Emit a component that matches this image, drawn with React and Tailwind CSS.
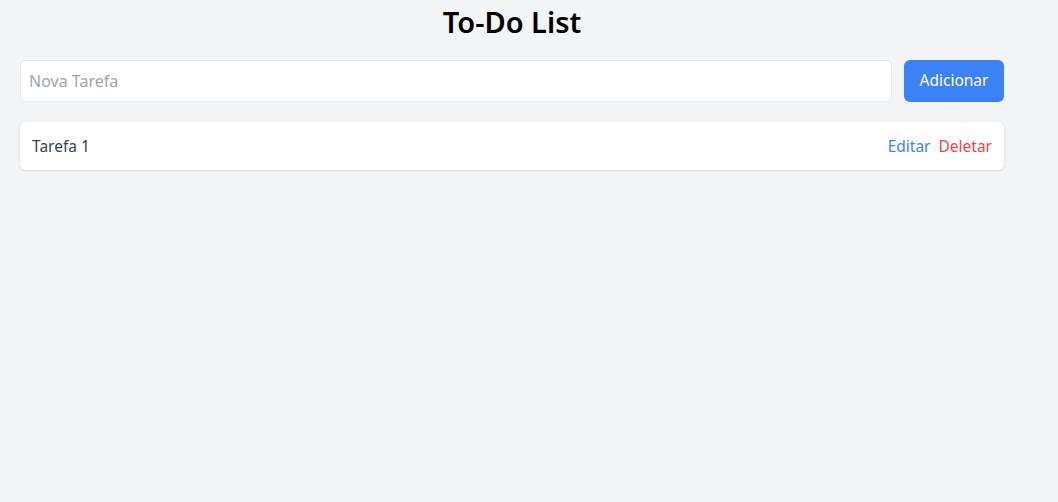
export default function App() {
  return (
    <div className="min-h-screen bg-gray-100 font-['Noto_Sans',sans-serif]">
      <div className="max-w-5xl px-5 pt-1">
        <h1 className="text-[29px] leading-9 font-semibold text-center text-black mb-5">To-Do List</h1>

        {/* New task form */}
        <div className="flex gap-3 mb-5">
          <input
            type="text"
            placeholder="Nova Tarefa"
            className="flex-1 h-[42px] px-2 bg-white border border-[#e5e7eb] rounded-md text-base text-[#374151] placeholder-[#9ca3af] outline-none"
          />
          <button className="h-[42px] w-[100px] bg-[#3b82f6] text-white rounded-md text-[15.5px]">
            Adicionar
          </button>
        </div>

        {/* Task list */}
        <ul>
          <li className="flex items-center justify-between h-12 px-3 pt-0.5 bg-white rounded-md shadow-sm">
            <span className="text-[15.5px] text-[#374151]">Tarefa 1</span>
            <div className="flex gap-2">
              <button className="text-[15.5px] text-[#3b82f6]">Editar</button>
              <button className="text-[15.5px] text-[#ef4444]">Deletar</button>
            </div>
          </li>
        </ul>
      </div>
    </div>
  )
}
